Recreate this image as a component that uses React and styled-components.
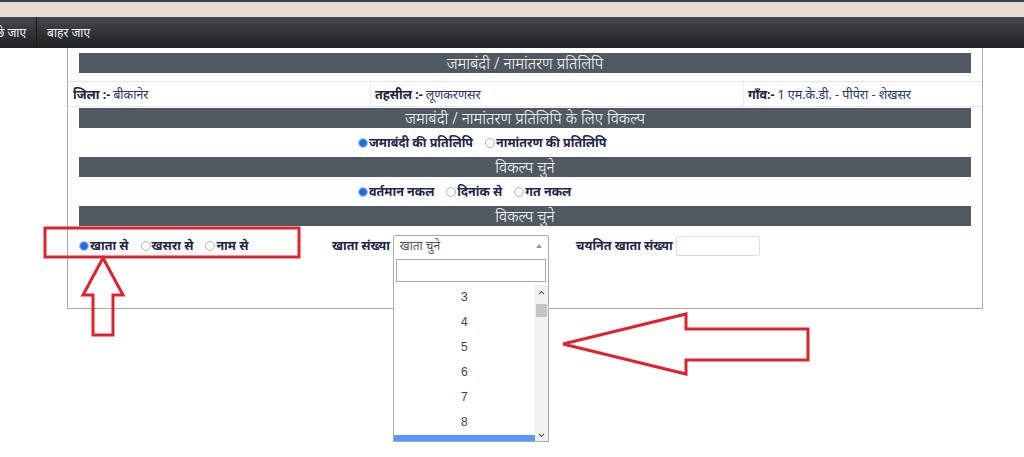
import React from "react";
import styled, { createGlobalStyle } from "styled-components";

const GlobalStyle = createGlobalStyle`
  html, body {
    margin: 0;
    padding: 0;
    background: #fff;
    font-family: "Noto Sans", "DejaVu Sans", sans-serif;
  }
  * { box-sizing: border-box; }
`;

const Page = styled.div`
  position: relative;
  width: 1024px;
  height: 457px;
  overflow: hidden;
`;

const TopStrip = styled.div`
  height: 17px;
  background: #e6ddd2;
  border-top: 2px solid #34465e;
`;

const NavBar = styled.nav`
  height: 31px;
  display: flex;
  align-items: center;
  background: linear-gradient(#45484e, #1f2023);
`;

const NavItem = styled.a`
  color: #f2f2f2;
  font-size: 12px;
  padding: 0 10px;
  margin-left: ${(p) => p.$shift || 0}px;
  border-right: 1px solid ${(p) => (p.$divider ? "#17181a" : "transparent")};
  line-height: 31px;
  text-decoration: none;
  white-space: nowrap;
`;

const Panel = styled.div`
  margin-left: 67px;
  width: 916px;
  height: 261px;
  border: 1px solid #ababab;
  border-top: none;
  padding: 5px 11px 0;
`;

const Bar = styled.div`
  height: 20px;
  background: #4f5961;
  color: #fff;
  text-align: center;
  font-size: 15.5px;
  line-height: 20px;
  font-weight: 300;
`;

const InfoRow = styled.div`
  display: grid;
  grid-template-columns: 302px 373px 1fr;
  margin: 8px -11px 1px;
  height: 26px;
  border-top: 1px solid #e6e6e6;
  border-bottom: 1px solid #e6e6e6;
`;

const InfoCell = styled.div`
  display: flex;
  align-items: center;
  padding-left: 4px;
  font-size: 12.5px;
  color: #2b3468;
  border-left: 1px solid ${(p) => (p.$first ? "transparent" : "#ececec")};
  b {
    color: #1d2238;
    margin-right: 3px;
  }
`;

const OptionRow = styled.div`
  height: 29px;
  display: flex;
  align-items: center;
  padding-left: ${(p) => p.$indent || 0}px;
  gap: 12px;
`;

const RadioLabel = styled.label`
  display: flex;
  align-items: center;
  font-size: 12.5px;
  font-weight: 700;
  color: #1f2647;
  white-space: nowrap;
`;

const Dot = styled.span`
  width: 10px;
  height: 10px;
  border-radius: 50%;
  margin-right: 1px;
  border: 1px solid ${(p) => (p.$on ? "#9bb8e6" : "#b5b5b5")};
  background: ${(p) => (p.$on ? "radial-gradient(#1a6fe0 55%, #5b93e6 70%)" : "#fff")};
`;

const SearchRow = styled.div`
  display: flex;
  align-items: center;
  height: 31px;
  margin-top: 4px;
`;

const RadioGroup = styled.div`
  display: flex;
  gap: 12px;
  width: 253px;
`;

const FieldLabel = styled.span`
  font-size: 12.5px;
  font-weight: 700;
  color: #1f2647;
  margin-right: ${(p) => p.$gap || 3}px;
  margin-left: ${(p) => p.$left || 0}px;
  white-space: nowrap;
`;

const SelectBox = styled.div`
  position: relative;
  width: 156px;
  height: 21px;
  border: 1px solid #aaa;
  border-bottom-color: #ddd;
  border-radius: 3px 3px 0 0;
  display: flex;
  align-items: center;
  padding-left: 6px;
  font-size: 12px;
  color: #555;
  &::after {
    content: "";
    position: absolute;
    right: 6px;
    top: 8px;
    border-left: 3px solid transparent;
    border-right: 3px solid transparent;
    border-bottom: 4px solid #999;
  }
`;

const Dropdown = styled.div`
  position: absolute;
  left: -1px;
  top: 19px;
  width: 156px;
  height: 187px;
  background: #fff;
  border: 1px solid #aaa;
  border-top: none;
  z-index: 2;
  display: flex;
  flex-direction: column;
`;

const SearchInput = styled.div`
  margin: 4px 2px 3px;
  height: 23px;
  border: 1px solid #aaa;
`;

const ListArea = styled.div`
  flex: 1;
  display: flex;
  overflow: hidden;
`;

const Options = styled.ul`
  flex: 1;
  list-style: none;
  margin: 0;
  padding: 0;
`;

const Option = styled.li`
  height: 25px;
  line-height: 25px;
  text-align: center;
  font-family: "Liberation Sans", Arial, sans-serif;
  font-size: 12px;
  color: #444;
  background: ${(p) => (p.$active ? "#5897fb" : "transparent")};
`;

const Scrollbar = styled.div`
  width: 13px;
  background: #f1f1f1;
  display: flex;
  flex-direction: column;
  align-items: center;
  position: relative;
`;

const Thumb = styled.div`
  position: absolute;
  top: 19px;
  left: 1px;
  width: 11px;
  height: 13px;
  background: #c4c4c4;
`;

const Chevron = styled.svg`
  width: 7px;
  height: 5px;
  margin: ${(p) => (p.$down ? "auto 0 3px" : "5px 0 0")};
`;

const TextBox = styled.div`
  width: 84px;
  height: 20px;
  border: 1px solid #ddd;
  border-radius: 2px;
`;

const Marks = styled.svg`
  position: absolute;
  left: 0;
  top: 0;
  pointer-events: none;
`;

const Radio = ({ on, children }) => (
  <RadioLabel>
    <Dot $on={on} />
    {children}
  </RadioLabel>
);

export default function App() {
  const items = [3, 4, 5, 6, 7, 8, 9];
  return (
    <Page>
      <GlobalStyle />
      <TopStrip />
      <NavBar>
        <NavItem $shift={-24} $divider>पीछे जाए</NavItem>
        <NavItem>बाहर जाए</NavItem>
      </NavBar>
      <Panel>
        <Bar>जमाबंदी / नामांतरण प्रतिलिपि</Bar>
        <InfoRow>
          <InfoCell $first>
            <b>जिला :-</b> बीकानेर
          </InfoCell>
          <InfoCell>
            <b>तहसील :-</b> लूणकरणसर
          </InfoCell>
          <InfoCell>
            <b>गाँव:-</b> 1 एम.के.डी. - पीपेरा - शेखसर
          </InfoCell>
        </InfoRow>
        <Bar>जमाबंदी / नामांतरण प्रतिलिपि के लिए विकल्प</Bar>
        <OptionRow $indent={279}>
          <Radio on>जमाबंदी की प्रतिलिपि</Radio>
          <Radio>नामांतरण की प्रतिलिपि</Radio>
        </OptionRow>
        <Bar>विकल्प चुने</Bar>
        <OptionRow $indent={279}>
          <Radio on>वर्तमान नकल</Radio>
          <Radio>दिनांक से</Radio>
          <Radio>गत नकल</Radio>
        </OptionRow>
        <Bar>विकल्प चुने</Bar>
        <SearchRow>
          <RadioGroup>
            <Radio on>खाता से</Radio>
            <Radio>खसरा से</Radio>
            <Radio>नाम से</Radio>
          </RadioGroup>
          <FieldLabel>खाता संख्या</FieldLabel>
          <SelectBox>
            खाता चुने
            <Dropdown>
              <SearchInput />
              <ListArea>
                <Options>
                  {items.map((n) => (
                    <Option key={n} $active={n === 9}>
                      {n === 9 ? "" : n}
                    </Option>
                  ))}
                </Options>
                <Scrollbar>
                  <Chevron viewBox="0 0 7 5">
                    <path d="M1 4 L3.5 1.5 L6 4" fill="none" stroke="#666" strokeWidth="1.2" />
                  </Chevron>
                  <Thumb />
                  <Chevron $down viewBox="0 0 7 5">
                    <path d="M1 1 L3.5 3.5 L6 1" fill="none" stroke="#666" strokeWidth="1.2" />
                  </Chevron>
                </Scrollbar>
              </ListArea>
            </Dropdown>
          </SelectBox>
          <FieldLabel $left={27}>चयनित खाता संख्या</FieldLabel>
          <TextBox />
        </SearchRow>
      </Panel>
      <Marks width="1024" height="457" viewBox="0 0 1024 457">
        <g fill="none" stroke="#dc2430" strokeWidth="3" strokeLinejoin="miter">
          <rect x="45" y="228" width="254" height="29" />
          <polygon points="103,258 83,295 93,295 93,335 113,335 113,295 123,295" />
          <polygon points="563,344 686,314 686,329 808,329 808,360 686,360 686,374" />
        </g>
      </Marks>
    </Page>
  );
}
